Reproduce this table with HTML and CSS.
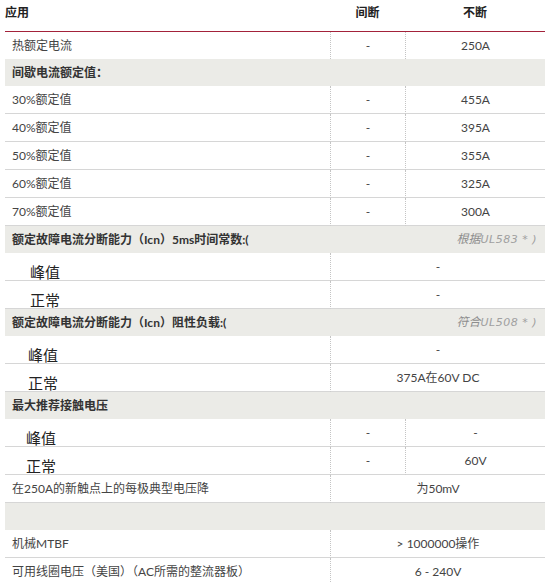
FILE: index.html
```html
<!DOCTYPE html>
<html lang="zh-CN">
<head>
<meta charset="utf-8">
<title>规格</title>
<link rel="stylesheet" href="styles.css">
</head>
<body>
<table class="spec">
  <colgroup>
    <col class="c1">
    <col class="c2">
    <col class="c3">
  </colgroup>
  <thead>
    <tr>
      <th class="h-app">应用</th>
      <th class="h-val">间断</th>
      <th class="h-val">不断</th>
    </tr>
  </thead>
  <tbody>
    <tr class="row first"><td class="label">热额定电流</td><td class="val">-</td><td class="val">250A</td></tr>
    <tr class="group"><td colspan="3"><div class="gline"><span>间歇电流额定值：</span></div></td></tr>
    <tr class="row"><td class="label">30%额定值</td><td class="val">-</td><td class="val">455A</td></tr>
    <tr class="row"><td class="label">40%额定值</td><td class="val">-</td><td class="val">395A</td></tr>
    <tr class="row"><td class="label">50%额定值</td><td class="val">-</td><td class="val">355A</td></tr>
    <tr class="row"><td class="label">60%额定值</td><td class="val">-</td><td class="val">325A</td></tr>
    <tr class="row"><td class="label">70%额定值</td><td class="val">-</td><td class="val">300A</td></tr>
    <tr class="group"><td colspan="3"><div class="gline"><span>额定故障电流分断能力（Icn）5ms时间常数:(</span><span class="note">根据<span class="ul">UL583 * )</span></span></div></td></tr>
    <tr class="row"><td class="big ind-a">峰值</td><td class="val" colspan="2">-</td></tr>
    <tr class="row"><td class="big ind-a">正常</td><td class="val" colspan="2">-</td></tr>
    <tr class="group"><td colspan="3"><div class="gline"><span>额定故障电流分断能力（Icn）阻性负载:(</span><span class="note">符合<span class="ul">UL508 * )</span></span></div></td></tr>
    <tr class="row"><td class="big ind-b">峰值</td><td class="val" colspan="2">-</td></tr>
    <tr class="row"><td class="big ind-b">正常</td><td class="val" colspan="2">375A在60V DC</td></tr>
    <tr class="group"><td colspan="3"><div class="gline"><span>最大推荐接触电压</span></div></td></tr>
    <tr class="row"><td class="big ind-c">峰值</td><td class="val">-</td><td class="val">-</td></tr>
    <tr class="row"><td class="big ind-c">正常</td><td class="val">-</td><td class="val">60V</td></tr>
    <tr class="row"><td class="label">在250A的新触点上的每极典型电压降</td><td class="val" colspan="2">为50mV</td></tr>
    <tr class="group"><td colspan="3"><div class="gline"></div></td></tr>
    <tr class="row"><td class="label">机械MTBF</td><td class="val" colspan="2">&gt; 1000000操作</td></tr>
    <tr class="row"><td class="label">可用线圈电压（美国）（AC所需的整流器板）</td><td class="val" colspan="2">6 - 240V</td></tr>
  </tbody>
</table>
</body>
</html>
```
FILE: styles.css
```css
html, body {
  margin: 0;
  padding: 0;
  background: #ffffff;
}

body {
  font-family: Lato, "Noto Sans CJK SC", sans-serif;
  font-size: 12px;
  color: #444444;
}

.spec {
  margin-left: 5px;
  width: 540px;
  table-layout: fixed;
  border-collapse: separate;
  border-spacing: 0;
}

.c1 { width: 325px; }
.c2 { width: 75px; }
.c3 { width: 140px; }

.spec th,
.spec td {
  box-sizing: border-box;
  padding: 0;
}

.spec th {
  height: 32px;
  vertical-align: top;
  padding-top: 4px;
  font-weight: 700;
  color: #222222;
  line-height: 17px;
  border-bottom: 1px solid #a3223a;
}

.spec .h-app { text-align: left; }
.spec .h-val { text-align: center; }

.row td {
  height: 28px;
  border-bottom: 1px solid #d6d6d6;
  vertical-align: middle;
  line-height: 16px;
}

.row.first td {
  height: 27px;
  border-bottom: none;
}

.row td + td {
  border-left: 1px dotted #c4c4c4;
}

.row td.label {
  padding-left: 7px;
  padding-right: 4px;
  white-space: nowrap;
}

.row td.val {
  text-align: center;
  white-space: nowrap;
}

.row td.big {
  font-size: 15px;
  line-height: 15px;
  vertical-align: bottom;
  color: #222222;
}

.row td.ind-a { padding-left: 25px; }
.row td.ind-b { padding-left: 23px; }
.row td.ind-c { padding-left: 21px; }

.group td {
  height: 27px;
  background: #ebebe7;
  vertical-align: middle;
}

.gline {
  display: flex;
  align-items: center;
  justify-content: space-between;
  padding: 0 8px 0 7px;
  font-weight: 700;
  color: #333333;
  line-height: 16px;
  white-space: nowrap;
}

.note {
  font-weight: 400;
  font-style: italic;
  color: #8e8e8e;
}

.note .ul {
  font-family: "DejaVu Sans", "Noto Sans CJK SC", sans-serif;
  font-size: 11px;
  font-weight: 300;
  color: #a0a0a0;
  letter-spacing: 0.5px;
}
```
